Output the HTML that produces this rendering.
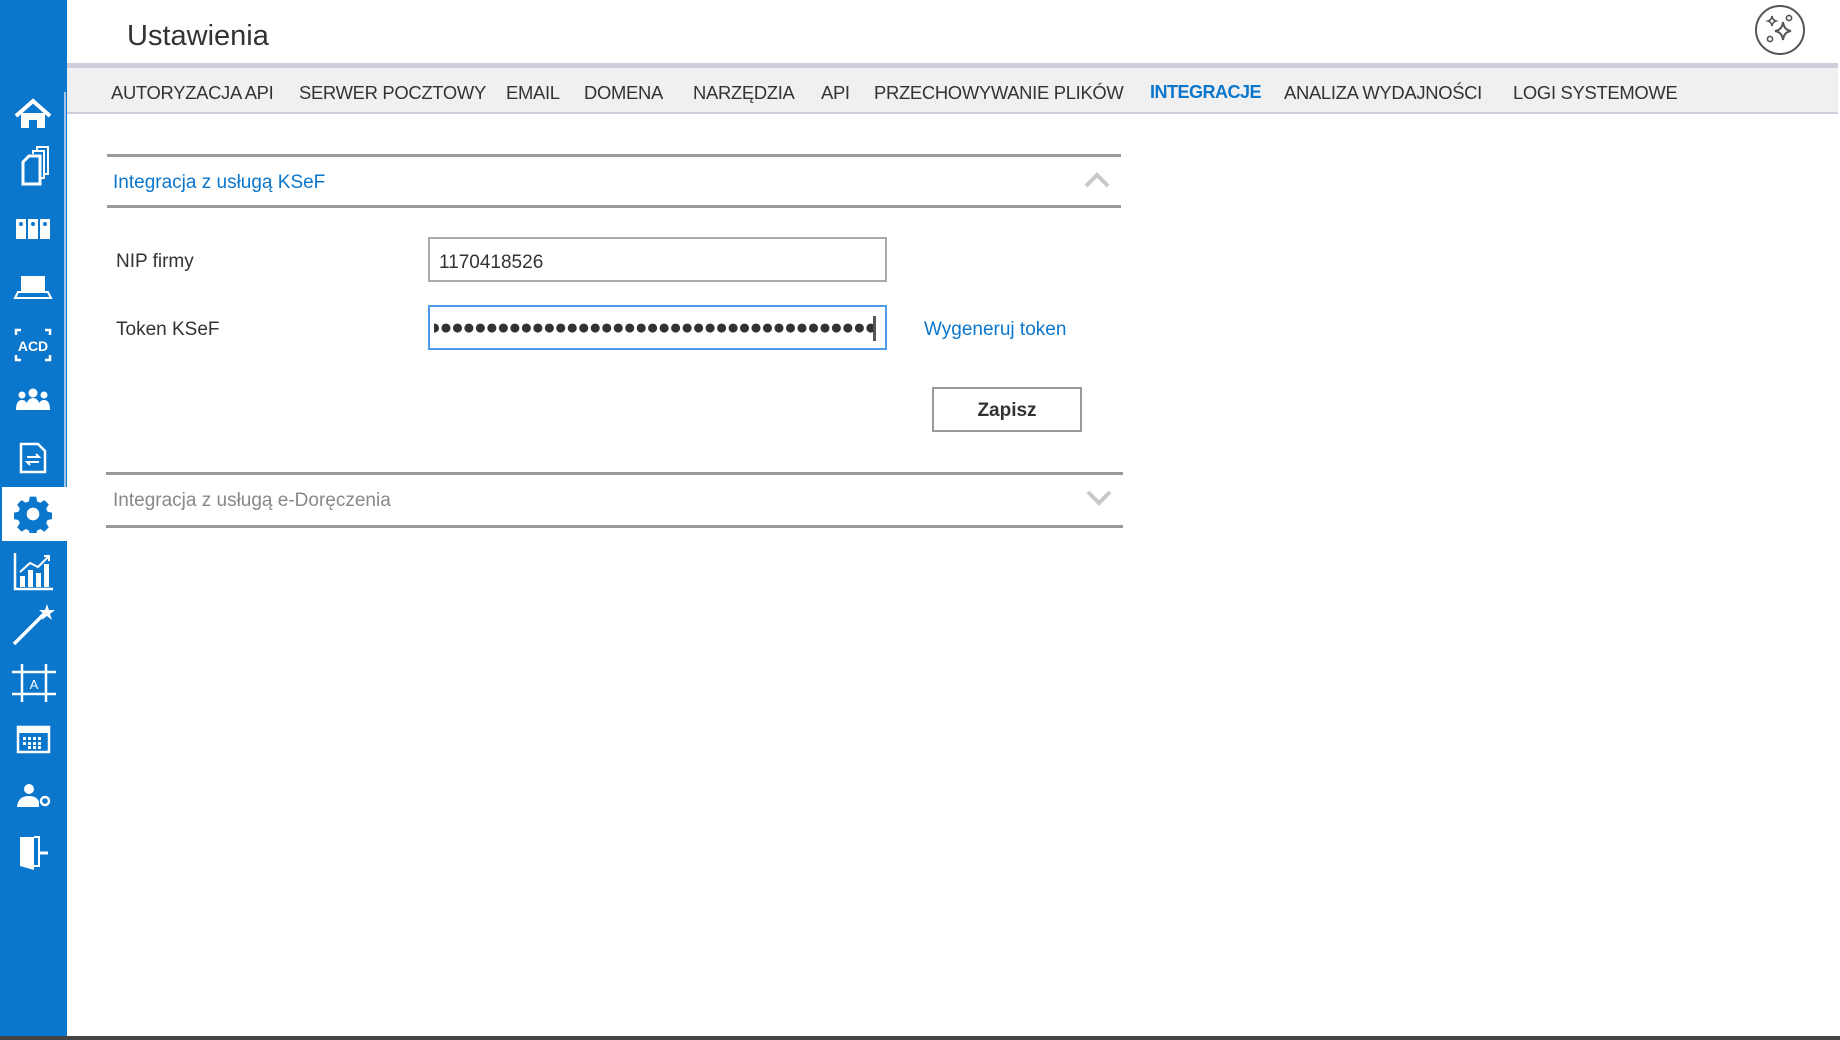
<!DOCTYPE html>
<html><head><meta charset="utf-8"><style>
*{margin:0;padding:0;box-sizing:border-box}
body{width:1840px;height:1040px;background:#fff;position:relative;overflow:hidden;font-family:"Liberation Sans",sans-serif;color:#333}
.a{position:absolute;white-space:nowrap}
#side{position:absolute;left:0;top:0;width:67px;height:1037px;background:#0a76cc}
.tab{position:absolute;top:82px;font-size:18.4px;color:#333;letter-spacing:-0.3px}
.line{position:absolute;height:3px;background:#9a9a9a}
</style></head><body>
<div id="side"></div>
<div class="a" style="left:64px;top:92px;width:2px;height:395px;background:#9fc4ea"></div>
<div class="a" style="left:2px;top:487px;width:65px;height:54px;background:#fff"></div>
<div class="a" style="left:0;top:1036px;width:1840px;height:4px;background:#444"></div>

<svg class="a" style="left:0;top:0" width="67" height="1040" fill="none" stroke="#fff" stroke-width="3">
<path d="M16 116 L33 101 L50 116" stroke-width="4"/><path d="M21 113 V128 H29 V120 H37 V128 H45 V113" fill="#fff" stroke="none"/>
<path d="M23 162 L29 156 H40 V184 H23 Z"/><path d="M33 154 V151 H44 V178 H41 M37 150 V147 H48 V174 H45" stroke-width="2"/>
<rect x="16" y="219" width="10" height="20" fill="#fff" stroke="none"/><rect x="28" y="219" width="10" height="20" fill="#fff" stroke="none"/><rect x="40" y="219" width="10" height="20" fill="#fff" stroke="none"/>
<circle cx="21" cy="224" r="2" fill="#0a76cc" stroke="none"/><circle cx="33" cy="224" r="2" fill="#0a76cc" stroke="none"/><circle cx="45" cy="224" r="2" fill="#0a76cc" stroke="none"/>
<rect x="21" y="276" width="24" height="15" fill="#fff" stroke="none"/><path d="M18 292 L15 298 H51 L48 292 Z" stroke-width="2"/>
<path d="M16 335 V330 H21 M45 330 H50 V335 M16 355 V360 H21 M45 360 H50 V355" stroke-width="2.5"/>
<text x="33" y="351" fill="#fff" stroke="none" font-size="14" font-weight="bold" text-anchor="middle" font-family="Liberation Sans">ACD</text>
<circle cx="22" cy="395" r="3.5" fill="#fff" stroke="none"/><circle cx="33" cy="393" r="4.5" fill="#fff" stroke="none"/><circle cx="44" cy="395" r="3.5" fill="#fff" stroke="none"/>
<path d="M16 410 Q16 400 22 400 Q28 400 28 410 Z M26 410 Q26 398 33 398 Q40 398 40 410 Z M38 410 Q38 400 44 400 Q50 400 50 410 Z" fill="#fff" stroke="none"/>
<path d="M21 444 H38 L45 451 V472 H21 Z" stroke-width="2.5"/><path d="M27 457 H39 L36 454 M39 462 H27 L30 465" stroke-width="2"/>
<path d="M15 553 V589 H53" stroke-width="2.5"/><rect x="20" y="576" width="5" height="11" fill="#fff" stroke="none"/><rect x="28" y="570" width="5" height="17" fill="#fff" stroke="none"/><rect x="36" y="573" width="5" height="14" fill="#fff" stroke="none"/><rect x="44" y="564" width="5" height="23" fill="#fff" stroke="none"/><path d="M20 572 L30 563 L38 567 L49 556 M44 556 H49 V561" stroke-width="2"/>
<path d="M14 644 L44 614" stroke-width="3.5"/><path d="M47 604 L49 610 L55 610 L50 614 L52 620 L47 616 L42 620 L44 614 L39 610 L45 610 Z" fill="#fff" stroke="none"/>
<path d="M12 672 H56 M12 694 H56 M22 664 V702 M46 664 V702" stroke-width="2.5"/>
<text x="34" y="689" fill="#fff" stroke="none" font-size="13" text-anchor="middle" font-family="Liberation Sans">A</text>
<rect x="18" y="727" width="31" height="25" stroke-width="2.5"/><rect x="18" y="727" width="31" height="6" fill="#fff" stroke="none"/>
<g fill="#fff" stroke="none"><rect x="23" y="737" width="3" height="3"/><rect x="28" y="737" width="3" height="3"/><rect x="33" y="737" width="3" height="3"/><rect x="38" y="737" width="3" height="3"/><rect x="23" y="742" width="3" height="3"/><rect x="28" y="742" width="3" height="3"/><rect x="33" y="742" width="3" height="3"/><rect x="38" y="742" width="3" height="3"/><rect x="28" y="746" width="3" height="3"/><rect x="33" y="746" width="3" height="3"/><rect x="38" y="746" width="3" height="3"/></g>
<circle cx="29" cy="789" r="5" fill="#fff" stroke="none"/><path d="M17 807 Q18 796 29 796 Q37 796 39 802 V807 Z" fill="#fff" stroke="none"/><circle cx="45" cy="801" r="4" stroke-width="2.5"/>
<path d="M20 837 H34 V870 L20 866 Z" fill="#fff" stroke="none"/><path d="M34 837 H39 V866 H34" stroke-width="2"/><path d="M40 853 H48" stroke-width="3"/>
</svg>
<svg class="a" style="left:14px;top:495px" width="38" height="38" viewBox="0 0 24 24"><path fill="#0a76cc" fill-rule="evenodd" d="M10 1h4l.6 3 2 .9 2.6-1.7 2.8 2.8-1.7 2.6.9 2 3 .6v4l-3 .6-.9 2 1.7 2.6-2.8 2.8-2.6-1.7-2 .9-.6 3h-4l-.6-3-2-.9-2.6 1.7-2.8-2.8 1.7-2.6-.9-2-3-.6v-4l3-.6.9-2-1.7-2.6 2.8-2.8 2.6 1.7 2-.9z M12 8a4 4 0 1 0 0 8 4 4 0 1 0 0-8z"/></svg>

<div class="a" style="left:127px;top:20px;font-size:29px;color:#333">Ustawienia</div>
<svg class="a" style="left:1754px;top:4px" width="52" height="52" fill="none" stroke="#555" stroke-width="2"><circle cx="26" cy="26" r="24"/><path d="M29 18 Q30 26 37 27 Q30 28 29 36 Q28 28 21 27 Q28 26 29 18Z"/><path d="M18 12 Q18.5 16 22 17 Q18.5 18 18 22 Q17.5 18 14 17 Q17.5 16 18 12Z" stroke-width="1.6"/><circle cx="35" cy="14" r="2.6" stroke-width="1.6"/><circle cx="16" cy="35" r="2.6" stroke-width="1.6"/></svg>

<div class="a" style="left:67px;top:63px;width:1771px;height:5px;background:#cdd0dc"></div>
<div class="a" style="left:67px;top:68px;width:1771px;height:44px;background:#f0f0f0"></div>
<div class="a" style="left:67px;top:112px;width:1771px;height:2px;background:#cdd0dc"></div>

<div class="tab" style="left:111px">AUTORYZACJA API</div>
<div class="tab" style="left:299px">SERWER POCZTOWY</div>
<div class="tab" style="left:506px">EMAIL</div>
<div class="tab" style="left:584px">DOMENA</div>
<div class="tab" style="left:693px">NARZĘDZIA</div>
<div class="tab" style="left:821px">API</div>
<div class="tab" style="left:874px">PRZECHOWYWANIE PLIKÓW</div>
<div class="tab" style="left:1150px;color:#0a76cc;font-weight:bold;font-size:18px;letter-spacing:-0.5px">INTEGRACJE</div>
<div class="tab" style="left:1284px">ANALIZA WYDAJNOŚCI</div>
<div class="tab" style="left:1513px">LOGI SYSTEMOWE</div>

<div class="line" style="left:107px;top:154px;width:1014px"></div>
<div class="a" style="left:113px;top:172px;font-size:19px;color:#0a76cc">Integracja z usługą KSeF</div>
<svg class="a" style="left:1084px;top:172px" width="26" height="16"><path d="M2 14 L13 3 L24 14" fill="none" stroke="#c8c8c8" stroke-width="4"/></svg>
<div class="line" style="left:107px;top:205px;width:1014px"></div>

<div class="a" style="left:116px;top:251px;font-size:19px">NIP firmy</div>
<div class="a" style="left:428px;top:237px;width:459px;height:45px;border:2px solid #aaa"></div>
<div class="a" style="left:439px;top:252px;font-size:19px">1170418526</div>
<div class="a" style="left:116px;top:319px;font-size:19px">Token KSeF</div>
<div class="a" style="left:428px;top:305px;width:459px;height:45px;border:2px solid #4f9be6"></div>
<div class="a" style="left:434px;top:316px;font-size:21px;letter-spacing:-1.2px;color:#333;width:442px;overflow:hidden;direction:rtl">●●●●●●●●●●●●●●●●●●●●●●●●●●●●●●●●●●●●●●●●●●</div>
<div class="a" style="left:873px;top:316px;width:3px;height:25px;background:#555"></div>
<div class="a" style="left:924px;top:319px;font-size:19px;color:#0a76cc">Wygeneruj token</div>

<div class="a" style="left:932px;top:387px;width:150px;height:45px;border:2px solid #999;font-size:19px;font-weight:bold;text-align:center;line-height:43px;color:#333">Zapisz</div>

<div class="line" style="left:106px;top:472px;width:1017px"></div>
<div class="a" style="left:113px;top:490px;font-size:19px;color:#888">Integracja z usługą e-Doręczenia</div>
<svg class="a" style="left:1086px;top:490px" width="26" height="16"><path d="M2 2 L13 13 L24 2" fill="none" stroke="#c8c8c8" stroke-width="4"/></svg>
<div class="line" style="left:106px;top:525px;width:1017px"></div>
</body></html>
